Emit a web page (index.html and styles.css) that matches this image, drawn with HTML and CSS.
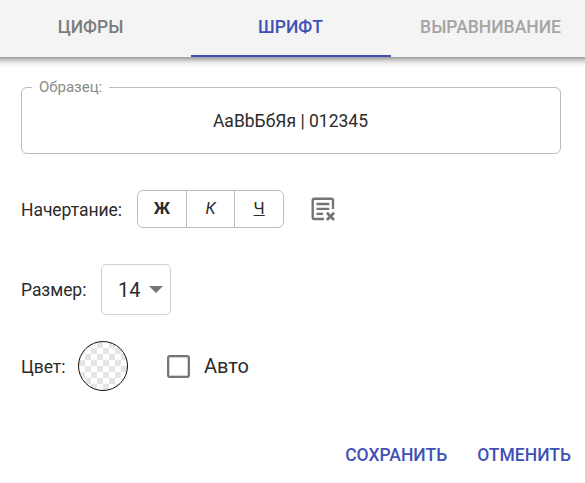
FILE: index.html
```html
<!DOCTYPE html>
<html lang="ru">
<head>
<meta charset="utf-8">
<title>Шрифт</title>
<link rel="stylesheet" href="styles.css">
</head>
<body>
<nav class="tabs">
  <div class="tab"><span>ЦИФРЫ</span></div>
  <div class="tab active"><span>ШРИФТ</span></div>
  <div class="tab disabled"><span>ВЫРАВНИВАНИЕ</span></div>
</nav>
<main class="panel">
  <fieldset class="sample">
    <legend>Образец:</legend>
    <span class="sample-text">AaBbБбЯя | 012345</span>
  </fieldset>
  <div class="row style-row">
    <span class="label style-label">Начертание:</span>
    <div class="group">
      <button class="bold">Ж</button>
      <button class="italic">К</button>
      <button class="underline">Ч</button>
    </div>
    <svg class="clear" width="26" height="26" viewBox="0 0 26 26" fill="none" stroke="#757575" stroke-width="2.4">
      <path d="M14 23H4.4Q2.7 23 2.7 21.3V4.4Q2.7 2.7 4.4 2.7H21.3Q23 2.7 23 4.4V13"/>
      <path d="M6.5 8H19.3M6.5 12.9H19.3M6.5 17.9H13"/>
      <path d="M16.9 16.8L24.1 24M24.1 16.8L16.9 24" stroke-width="2.7"/>
    </svg>
  </div>
  <div class="row size-row">
    <span class="label size-label">Размер:</span>
    <div class="select"><span>14</span><i class="arrow"></i></div>
  </div>
  <div class="row color-row">
    <span class="label color-label">Цвет:</span>
    <div class="swatch"></div>
    <span class="checkbox"></span>
    <span class="auto">Авто</span>
  </div>
</main>
<footer class="actions">
  <button class="action save">СОХРАНИТЬ</button>
  <button class="action">ОТМЕНИТЬ</button>
</footer>
</body>
</html>
```
FILE: styles.css
```css
* { box-sizing: border-box; }
body {
  margin: 0;
  width: 585px;
  height: 483px;
  overflow: hidden;
  background: #fff;
  color: #2b2b2b;
  font: 17.5px/24px Roboto, sans-serif;
}
button {
  margin: 0;
  padding: 0;
  border: 0;
  background: none;
  color: inherit;
  font: inherit;
}
.tabs {
  display: flex;
  justify-content: center;
  width: 600px;
  height: 57px;
  margin-left: -9px;
  background: #f4f4f4;
  box-shadow: 0 2px 5px -1px rgba(0,0,0,.3), 0 4px 6px rgba(0,0,0,.18), 0 1px 12px rgba(0,0,0,.14);
}
.tab {
  flex: 0 0 200px;
  display: flex;
  align-items: center;
  justify-content: center;
  padding: 0 1px 2px 0;
  border-bottom: 2px solid transparent;
  color: #7c7c7c;
  font-weight: 500;
}
.tab.active { color: #3f51b5; border-color: #3f51b5; }
.tab.disabled { color: #a4a4a4; }
.panel { padding: 21px 24px 0 21px; }
.sample {
  display: block;
  width: 540px;
  height: 76px;
  margin: 0;
  padding: 0 0 0 10px;
  border: 1px solid #bdbdbd;
  border-radius: 6px;
}
.sample legend {
  height: 18px;
  padding: 0 7px;
  color: #8a8a8a;
  font-size: 15px;
  line-height: 18px;
}
.sample-text {
  display: block;
  padding-top: 13px;
  margin-left: -11px;
  text-align: center;
}
.row { display: flex; align-items: center; }
.style-row { height: 38px; margin-top: 36px; }
.label { letter-spacing: -.05px; }
.style-label { width: 116px; padding-top: 2px; }
.group {
  display: flex;
  width: 147px;
  height: 38px;
  border: 1px solid #bdbdbd;
  border-radius: 6px;
}
.group button { flex: 1; font-size: 16.25px; }
.group button + button { border-left: 1px solid #bdbdbd; }
.bold { font-weight: 700; }
.italic { font-style: italic; }
.underline { text-decoration: underline; }
.clear { margin-left: 26px; }
.size-row { height: 51px; margin-top: 36px; }
.size-label { width: 80px; }
.select {
  display: flex;
  align-items: center;
  width: 70px;
  height: 51px;
  padding-left: 16px;
  border: 1px solid #d0d0d8;
  border-radius: 5px;
  font-size: 20px;
}
.arrow {
  margin-left: 9px;
  border: 6.5px solid transparent;
  border-width: 7px 7px 0;
  border-top-color: #757575;
}
.color-row { height: 50px; margin-top: 26px; }
.color-label { width: 57px; padding-top: 2px; }
.swatch {
  width: 50px;
  height: 50px;
  border: 1px solid #111;
  border-radius: 50%;
  background: repeating-conic-gradient(#e5e5e5 0 25%, #fff 0 50%) 0 0 / 12px 12px;
}
.checkbox {
  width: 23px;
  height: 23px;
  margin-left: 39px;
  border: 2.5px solid #757575;
  border-radius: 3px;
  box-shadow: inset 0 0 0 .5px #aaa;
}
.auto { margin-left: 14px; font-size: 20px; }
.actions {
  display: flex;
  justify-content: flex-end;
  gap: 30px;
  padding: 52px 14px 0 0;
}
.action { color: #3f51b5; font-weight: 500; }
```
